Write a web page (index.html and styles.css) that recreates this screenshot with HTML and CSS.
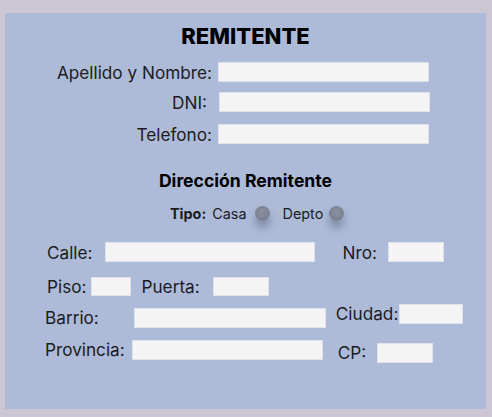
FILE: index.html
```html
<!DOCTYPE html>
<html>
<head>
    <meta charset="UTF-8">
    <link rel="stylesheet" href="styles.css">
</head>
<body>
    <div class="panel">
        <h1 class="title">REMITENTE</h1>

        <div class="row row-name">
            <label class="label-right">Apellido y Nombre:</label>
            <input class="field field-wide" type="text">
        </div>
        <div class="row row-dni">
            <label class="label-right">DNI:</label>
            <input class="field field-wide" type="text">
        </div>
        <div class="row row-tel">
            <label class="label-right">Telefono:</label>
            <input class="field field-wide" type="text">
        </div>

        <h2 class="subtitle">Dirección Remitente</h2>

        <div class="tipo">
            <span class="tipo-label">Tipo:</span>
            <span class="opt">Casa</span>
            <span class="radio"></span>
            <span class="opt opt-depto">Depto</span>
            <span class="radio radio-depto"></span>
        </div>

        <div class="row row-calle">
            <label class="lbl">Calle:</label>
            <input class="field calle" type="text">
            <label class="lbl nro-lbl">Nro:</label>
            <input class="field nro" type="text">
        </div>
        <div class="row row-piso">
            <label class="lbl">Piso:</label>
            <input class="field piso" type="text">
            <label class="lbl puerta-lbl">Puerta:</label>
            <input class="field puerta" type="text">
        </div>
        <div class="row row-barrio">
            <label class="lbl barrio-lbl">Barrio:</label>
            <input class="field barrio" type="text">
            <label class="lbl ciudad-lbl">Ciudad:</label>
            <input class="field ciudad" type="text">
        </div>
        <div class="row row-prov">
            <label class="lbl prov-lbl">Provincia:</label>
            <input class="field prov" type="text">
            <label class="lbl cp-lbl">CP:</label>
            <input class="field cp" type="text">
        </div>
    </div>
</body>
</html>
```

FILE: styles.css
```css
body {
    margin: 0;
    background-color: #ccc6d4;
    font-family: Inter, "Noto Sans", sans-serif;
    color: #1c1c1f;
}

.panel {
    margin: 13px 0 0 5px;
    width: 481px;
    height: 396px;
    box-sizing: border-box;
    padding-top: 10px;
    background-color: #adbbd9;
}

.title {
    margin: 0;
    text-align: center;
    font-size: 22px;
    font-weight: 800;
    line-height: 26px;
    color: #000;
}

.row {
    display: flex;
    align-items: center;
    height: 20px;
    font-size: 17.2px;
}

.row-name { margin-top: 13px; }
.row-dni { margin-top: 10px; }
.row-tel { margin-top: 12px; }

.label-right {
    width: 207px;
    text-align: right;
    margin-right: 6px;
    white-space: nowrap;
}

.row-dni .label-right {
    width: 202px;
    margin-right: 12px;
}

.field {
    height: 20px;
    box-sizing: border-box;
    border: 1px solid #dfe2ea;
    background-color: #f4f4f5;
    padding: 0;
    margin: 0;
}

.field-wide { width: 211px; }

.subtitle {
    margin: 26px 0 0;
    text-align: center;
    font-size: 17.6px;
    font-weight: 700;
    line-height: 22px;
    color: #000;
}

.tipo {
    display: flex;
    align-items: center;
    height: 18px;
    margin-top: 12px;
    padding-left: 165px;
    font-size: 14.4px;
}

.tipo-label {
    font-weight: 700;
    margin-right: 6px;
}

.opt-depto { margin-left: 13px; }

.radio {
    width: 15px;
    height: 15px;
    margin-left: 8px;
    border-radius: 50%;
    background: radial-gradient(circle at 50% 40%, #8a90a0, #72798a);
    box-shadow: 0 7px 9px rgba(40, 45, 60, 0.35);
}

.radio-depto { margin-left: 6px; }

.lbl { white-space: nowrap; }

.row-calle {
    margin-top: 20px;
    padding-left: 42px;
}
.calle { width: 210px; margin-left: 12px; }
.nro-lbl { margin-left: 28px; }
.nro { width: 56px; margin-left: 11px; }

.row-piso {
    margin-top: 15px;
    padding-left: 42px;
    height: 19px;
}
.piso { width: 40px; height: 19px; margin-left: 5px; }
.puerta-lbl { margin-left: 10px; }
.puerta { width: 56px; height: 19px; margin-left: 13px; }

.row-barrio {
    margin-top: 8px;
    padding-left: 40px;
    align-items: flex-start;
    height: 24px;
}
.barrio-lbl { margin-top: 4px; line-height: 20px; }
.barrio { width: 192px; margin-left: 35px; margin-top: 4px; }
.ciudad-lbl { margin-left: 10px; line-height: 20px; }
.ciudad { width: 64px; margin-left: 1px; }

.row-prov {
    margin-top: 12px;
    padding-left: 40px;
    align-items: flex-start;
    height: 23px;
}
.prov-lbl { line-height: 20px; }
.prov { width: 191px; margin-left: 7px; }
.cp-lbl { margin-left: 15px; margin-top: 3px; line-height: 20px; }
.cp { width: 56px; margin-left: 11px; margin-top: 3px; }
```
